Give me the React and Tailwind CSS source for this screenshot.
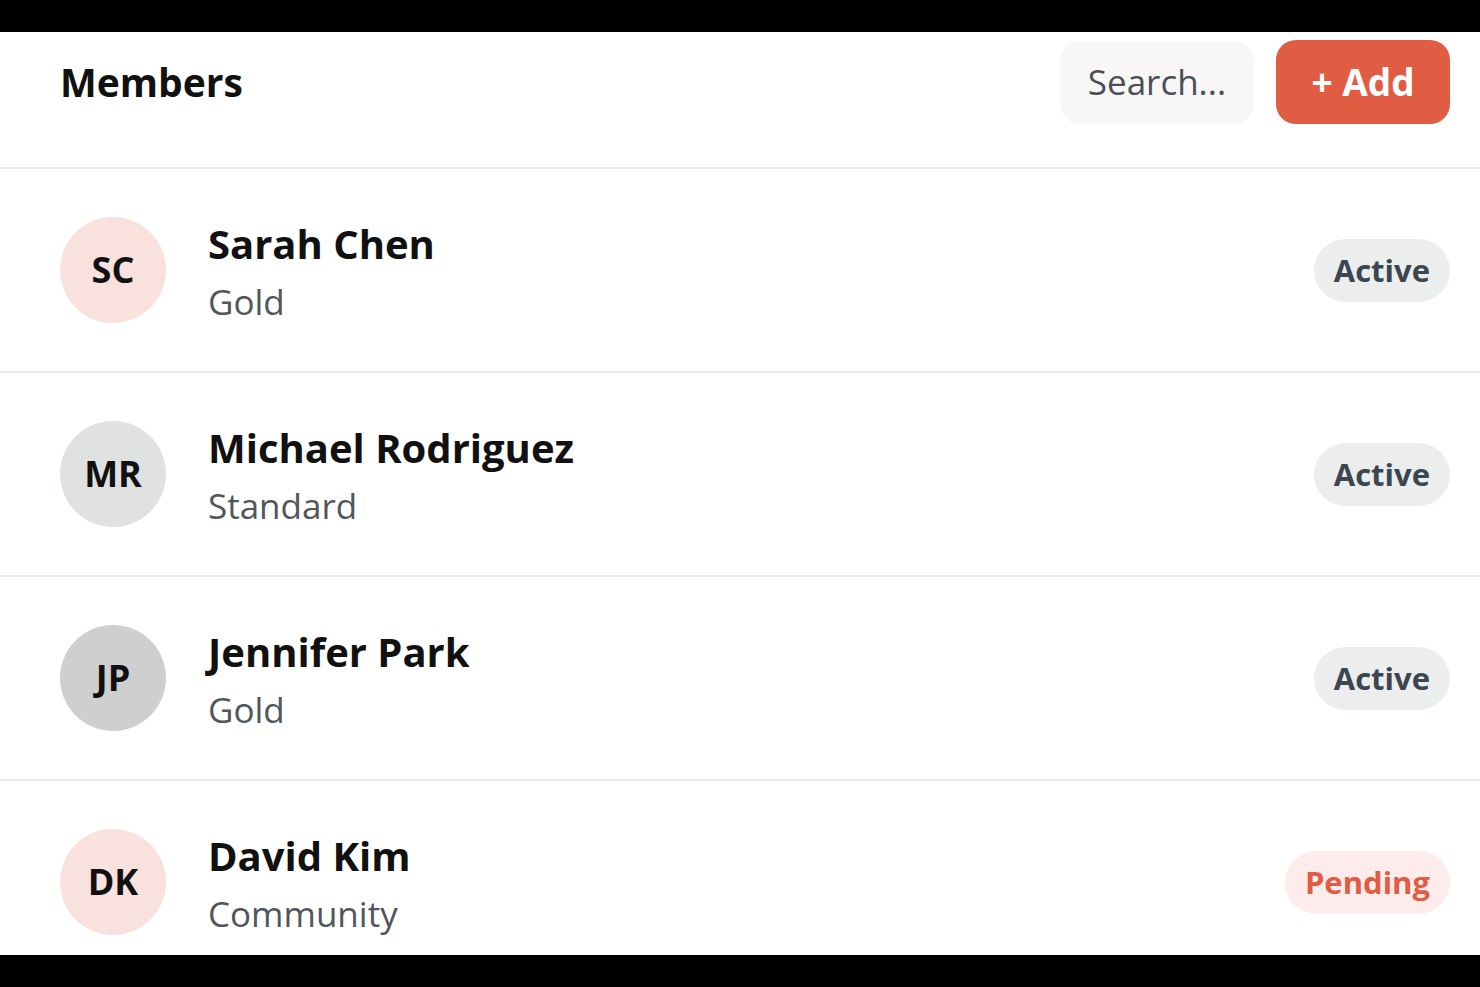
import React from 'react';

const members = [
  { initials: 'SC', name: 'Sarah Chen', tier: 'Gold', status: 'Active', avatar: 'bg-[#f9e1dd]' },
  { initials: 'MR', name: 'Michael Rodriguez', tier: 'Standard', status: 'Active', avatar: 'bg-[#e0e2e2]' },
  { initials: 'JP', name: 'Jennifer Park', tier: 'Gold', status: 'Active', avatar: 'bg-[#cfcfcf]' },
  { initials: 'DK', name: 'David Kim', tier: 'Community', status: 'Pending', avatar: 'bg-[#f9e1dd]' },
];

function StatusBadge({ status }) {
  if (status === 'Pending') {
    return (
      <span className="h-[63px] px-[20px] rounded-full bg-[#fdeceb] text-[#e05d44] text-[31px] font-bold flex items-center">
        {status}
      </span>
    );
  }
  return (
    <span className="h-[63px] px-[20px] rounded-full bg-[#eceeee] text-[#3b4650] text-[31px] font-bold flex items-center">
      {status}
    </span>
  );
}

export default function App() {
  return (
    <div className="w-[1480px] h-[987px] bg-black flex flex-col font-['Open_Sans',sans-serif]">
      <div className="h-[32px] shrink-0" />

      <div className="h-[923px] bg-white overflow-hidden flex flex-col">
        {/* --- HEADER --- */}
        <header className="flex items-center justify-between pl-[60px] pr-[30px] pt-[8px] pb-[43px] border-b-2 border-[#ebebeb] shrink-0">
          <h1 className="text-[39px] font-bold text-[#111]">Members</h1>
          <div className="flex items-center gap-[22px]">
            <div className="h-[83px] w-[194px] rounded-[20px] bg-[#f8f7f5] flex items-center justify-center text-[35px] text-[#4a5058]">
              Search...
            </div>
            <button className="h-[84px] w-[174px] rounded-[20px] bg-[#e05d44] text-white text-[37px] font-bold flex items-center justify-center">
              + Add
            </button>
          </div>
        </header>

        {/* --- LIST --- */}
        {members.map((m) => (
          <div
            key={m.initials}
            className="h-[204px] shrink-0 flex items-center justify-between pl-[60px] pr-[30px] border-b-2 border-[#ebebeb]"
          >
            <div className="flex items-center gap-[42px]">
              <div className={`w-[106px] h-[106px] rounded-full ${m.avatar} flex items-center justify-center text-[36px] font-bold text-[#111]`}>
                {m.initials}
              </div>
              <div className="flex flex-col pt-[6px]">
                <div className="text-[40px] font-bold text-[#111] leading-[58px]">{m.name}</div>
                <div className="text-[35px] text-[#50565c] leading-[58px]">{m.tier}</div>
              </div>
            </div>
            <StatusBadge status={m.status} />
          </div>
        ))}
      </div>

      <div className="h-[32px] shrink-0" />
    </div>
  );
}
